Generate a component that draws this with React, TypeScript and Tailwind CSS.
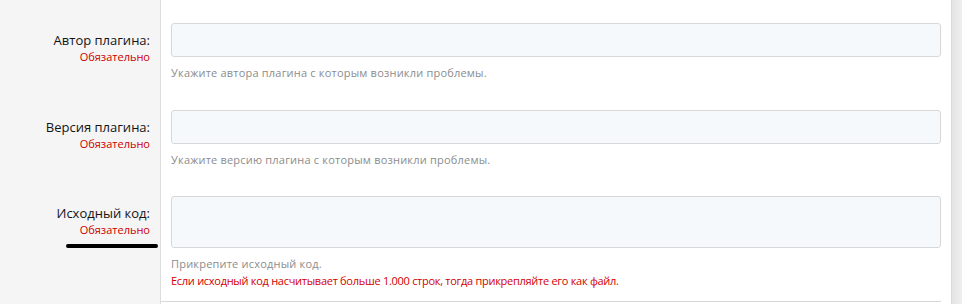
const font = { fontFamily: '"Open Sans", "Noto Sans", sans-serif' };

type Row = {
  label: string;
  hints: { text: string; red?: boolean }[];
  tall?: boolean;
  marked?: boolean;
};

const rows: Row[] = [
  {
    label: "Автор плагина:",
    hints: [{ text: "Укажите автора плагина с которым возникли проблемы." }],
  },
  {
    label: "Версия плагина:",
    hints: [{ text: "Укажите версию плагина с которым возникли проблемы." }],
  },
  {
    label: "Исходный код:",
    tall: true,
    marked: true,
    hints: [
      { text: "Прикрепите исходный код." },
      {
        text: "Если исходный код насчитывает больше 1.000 строк, тогда прикрепляйте его как файл.",
        red: true,
      },
    ],
  },
];

function FormRow({ row, first }: { row: Row; first?: boolean }) {
  return (
    <div className="flex">
      {/* label column */}
      <div
        className={`w-[160px] shrink-0 bg-[#f5f5f5] pr-[10px] text-right ${
          first ? "pt-[31px]" : row.tall ? "pt-[36px]" : "pt-[37px]"
        }`}
      >
        <div className="text-[13px] leading-[18px] text-[#141414]">{row.label}</div>
        <div className="text-[11px] leading-[16px] text-[#cc0000]">Обязательно</div>
        {row.marked && (
          <div className="ml-auto mt-[6px] mr-[-8px] h-[4px] w-[92px] rounded-full bg-black" />
        )}
      </div>
      {/* field column */}
      <div
        className={`flex-1 border-l border-[#dcdcdc] bg-white pl-[10px] pr-[10px] ${
          first ? "pt-[23px]" : row.tall ? "pt-[28px]" : "pt-[29px]"
        }`}
      >
        <div
          className={`w-full rounded-[3px] border border-[#d8d8d8] bg-[#f6f9fc] ${
            row.tall ? "h-[52px]" : "h-[34px]"
          }`}
        />
        <div className="mt-[7px]">
          {row.hints.map((h) => (
            <div
              key={h.text}
              className={`text-[11px] leading-[17px] ${
                h.red
                  ? "tracking-[-0.28px] text-[#d40000]"
                  : "tracking-[0.2px] text-[#8c8c8c]"
              }`}
            >
              {h.text}
            </div>
          ))}
        </div>
      </div>
    </div>
  );
}

export default function App() {
  return (
    <div className="flex h-[304px] w-[962px] overflow-hidden bg-white" style={font}>
      <div className="flex w-[951px] flex-col">
        {rows.map((r, i) => (
          <FormRow key={r.label} row={r} first={i === 0} />
        ))}
        <div className="flex flex-1">
          <div className="w-[160px] shrink-0 bg-[#f5f5f5]" />
          <div className="flex-1 border-l border-[#dcdcdc] bg-white pr-[10px] pt-[12px]">
            <div className="h-px bg-[#d8d8d8]" />
          </div>
        </div>
      </div>
      <div className="flex-1 border-l border-[#dadada] bg-gradient-to-r from-[#e4e4e4] to-[#efefef]" />
    </div>
  );
}
